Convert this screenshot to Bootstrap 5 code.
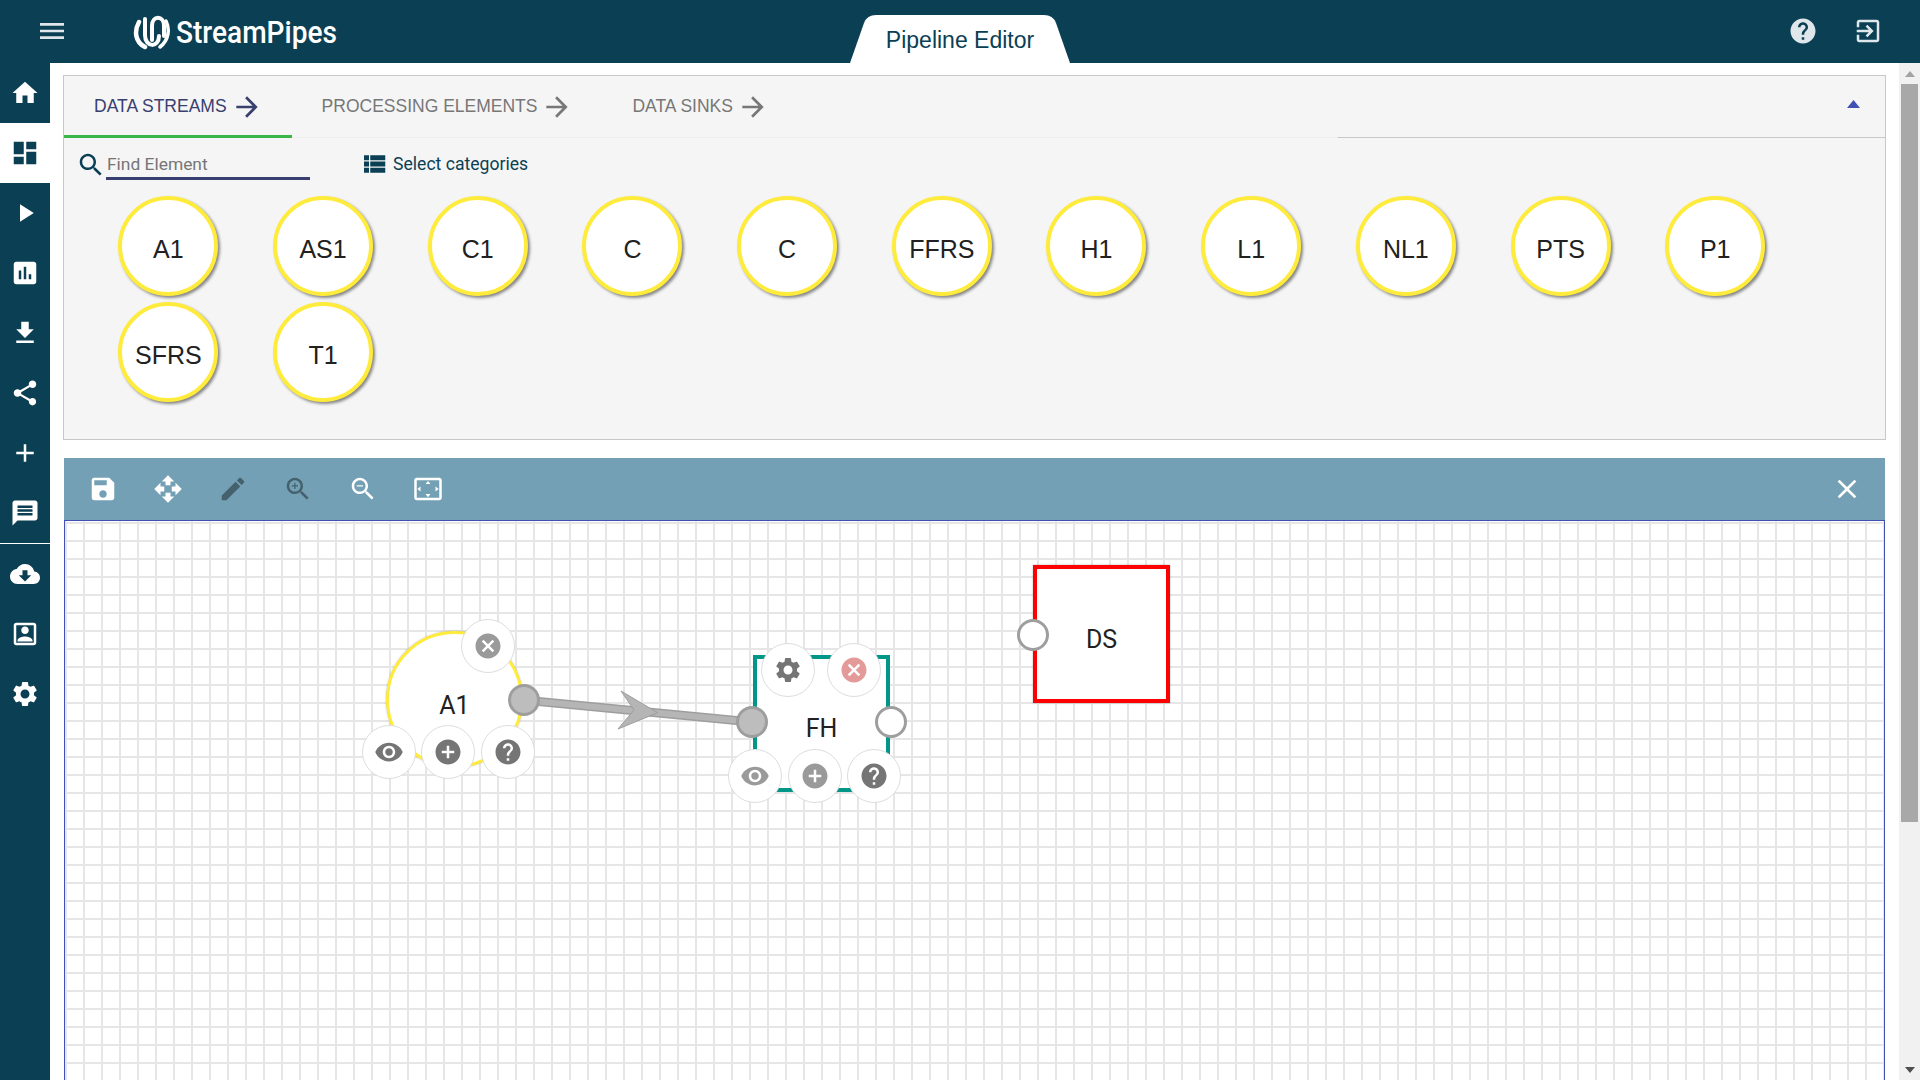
<!DOCTYPE html>
<html lang="en">
<head>
  <meta charset="UTF-8" />
  <meta name="viewport" content="width=device-width, initial-scale=1" />
  <title>StreamPipes - Pipeline Editor</title>
  <link href="https://cdn.jsdelivr.net/npm/bootstrap@5.3.0/dist/css/bootstrap.min.css" rel="stylesheet" />
  <style>
    html, body { height: 100%; }
    body { font-family: Roboto, "Liberation Sans", sans-serif; overflow: hidden; background: #fff; color: #212121; }
    .ico { width: 30px; height: 30px; fill: currentColor; flex: none; display: block; }

    .sp-top { height: 63px; background: #0b3f54; flex: none; }
    .sp-top-side { flex: 1 1 0; min-width: 0; }
    .sp-burger { width: 50px; margin: -2px 0 0 27px; padding: 0; border: 0; background: none; color: #dfe7ea; display: flex; justify-content: center; }
    .sp-burger .ico { width: 32px; height: 32px; }
    .sp-logo { margin-left: 56px; color: #fff; }
    .sp-logo svg { width: 38px; height: 38px; display: block; margin-top: -1px; }
    .sp-logo-text { font: 500 31px/1 Roboto, sans-serif; margin: 2px 0 0 5px; transform: scaleX(.905); transform-origin: left center; white-space: nowrap; }
    .sp-tab { width: 220px; height: 48px; margin-top: 15px; background: #fff; color: #0b3f54; font: 23px "Liberation Sans", sans-serif; text-align: center; line-height: 50px;
      clip-path: path('M0 48 L14 8 Q17 0 26 0 L194 0 Q203 0 206 8 L220 48 Z'); }
    .sp-top-btn { color: #dfe7ea; margin-top: -2px; }
    .sp-top-btn + .sp-top-btn { margin-left: 35px; margin-right: 37px; }

    .sp-side { width: 50px; flex: none; background: #0b3f54; padding: 0; }
    .sp-side-item { height: 60px; padding: 0; color: #fff; display: flex; align-items: center; justify-content: center; }
    .sp-side-item.is-on { background: #fff; color: #0b3f54; }
    .sp-side-sep { height: 1px; background: #fff; }

    .sp-main { padding: 12px 13px 0; min-width: 0; }
    .sp-panel { height: 365px; background: #f5f5f5; border: 1px solid #c8c8c8; flex: none; }

    .sp-tabs { height: 62px; }
    .sp-tabs-group { width: 1274px; border-bottom: 1px solid #ededed; }
    .sp-tab-link { padding: 2px 29px 0 30px; gap: 4px; color: #777; font: 17.5px "Liberation Sans", sans-serif; white-space: nowrap; border-bottom: 3px solid transparent; height: 62px; margin-bottom: -1px; }
    .sp-tab-link .ico { width: 32px; height: 32px; }
    .sp-tab-link:hover { color: #777; }
    .sp-tab-link.is-on { color: #39406f; border-bottom-color: #39b54a; }
    .sp-tabs-rest { border-bottom: 1px solid #c8c8c8; padding-right: 25px; color: #3f51b5; }
    .sp-tabs-rest svg { width: 13px; height: 8px; fill: currentColor; margin-bottom: 5px; }

    .sp-find { padding: 8px 0 16px 12px; height: 58px; color: #0b3f54; }
    .sp-find > .ico { margin-top: 3px; }
    .sp-find-input.form-control { width: 204px; height: 34px; padding: 4px 0 0 1px; background: transparent; border: 0; border-bottom: 3px solid #39406f; border-radius: 0; font-size: 17.4px; box-shadow: none; }
    .sp-find-input::placeholder { color: #757575; opacity: 1; }
    .sp-cats { margin: 2px 0 0 49px; gap: 4px; font-size: 17.6px; }

    .sp-palette { display: grid; grid-template-columns: repeat(11, 154.7px); grid-auto-rows: 106px; padding-left: 27px; }
    .sp-bubble { width: 100px; height: 100px; justify-self: center; border-radius: 50%; background: #fff; border: 4px solid #ffeb3b; box-shadow: 2px 2px 3px rgba(0,0,0,.45); display: flex; align-items: center; justify-content: center; padding-top: 7px; font: 25px "Liberation Sans", sans-serif; color: #212121; }

    .sp-bar { height: 62px; margin: 18px 1px 0; background: #73a0b4; color: #fff; flex: none; padding-left: 24px; padding-right: 22px; gap: 35px; }
    .sp-bar .is-off { color: #45616d; }
    .sp-bar-close.ico { width: 32px; height: 32px; }

    .sp-canvas { position: relative; margin: 0 1px; overflow: hidden; background-color: #fff; border: 1px solid #3f51b5; border-bottom: 0;
      background-image: linear-gradient(#e6e6e6 2px, transparent 2px), linear-gradient(90deg, #e6e6e6 2px, transparent 2px);
      background-size: 18px 18px; background-position: 0 1px; }
    .sp-node { position: absolute; width: 137px; height: 137px; background: #fff; display: flex; align-items: center; justify-content: center; font-size: 25px; }
    .sp-node-stream { left: 321px; top: 110px; border: 3px solid #ffeb3b; border-radius: 50%; padding-top: 13px; box-shadow: 0 0 2px rgba(0,0,0,.3); }
    .sp-node-proc { left: 688px; top: 134px; border: 4px solid #009688; padding-top: 11px; }
    .sp-node-sink { left: 968px; top: 44px; height: 138px; border: 4px solid #f00; padding-top: 11px; box-shadow: 0 0 2px rgba(0,0,0,.3); }
    .sp-wire { position: absolute; left: 0; top: 0; width: 1000px; height: 400px; }
    .sp-port { position: absolute; width: 32px; height: 32px; margin: -16px 0 0 -16px; border-radius: 50%; background: #fff; border: 3px solid #9e9e9e; }
    .sp-port.is-full { background: #bdbdbd; }
    .sp-act { position: absolute; width: 54px; height: 54px; margin: -27px 0 0 -27px; border-radius: 50%; background: #fff; border: 1px solid #ddd; color: #757575; display: flex; align-items: center; justify-content: center; }
    .sp-act.is-dim { color: #9a9a9a; }
    .sp-act.is-red { color: #e59a9a; }

    .p1 { left: 459px; top: 179px; } .p2 { left: 687px; top: 201px; } .p3 { left: 826px; top: 201px; } .p4 { left: 968px; top: 114px; }
    .b1 { left: 423px; top: 125px; } .b2 { left: 324px; top: 231px; } .b3 { left: 383px; top: 231px; } .b4 { left: 443px; top: 231px; }
    .b5 { left: 723px; top: 149px; } .b6 { left: 789px; top: 149px; } .b7 { left: 690px; top: 255px; } .b8 { left: 750px; top: 255px; } .b9 { left: 809px; top: 255px; }

    .sp-scroll { width: 21px; flex: none; background: #f1f1f1; padding: 0 2px; }
    .sp-scroll-up, .sp-scroll-down { height: 21px; color: #a3a3a3; }
    .sp-scroll-down { color: #505050; margin-top: auto; }
    .sp-scroll svg { width: 10px; height: 6px; fill: currentColor; }
    .sp-scroll-thumb { height: 738px; background: #a8a8a8; }
  </style>
</head>
<body class="d-flex flex-column">
  <svg class="d-none">
    <symbol id="i-menu" viewBox="0 0 24 24"><path d="M3 18h18v-2H3v2zm0-5h18v-2H3v2zm0-7v2h18V6H3z"/></symbol>
    <symbol id="i-home" viewBox="0 0 24 24"><path d="M10 20v-6h4v6h5v-8h3L12 3 2 12h3v8z"/></symbol>
    <symbol id="i-dash" viewBox="0 0 24 24"><path d="M3 13h8V3H3v10zm0 8h8v-6H3v6zm10 0h8V11h-8v10zm0-18v6h8V3h-8z"/></symbol>
    <symbol id="i-play" viewBox="0 0 24 24"><path d="M8 5v14l11-7z"/></symbol>
    <symbol id="i-chart" viewBox="0 0 24 24"><path d="M19 3H5c-1.1 0-2 .9-2 2v14c0 1.1.9 2 2 2h14c1.1 0 2-.9 2-2V5c0-1.1-.9-2-2-2zM9 17H7v-7h2v7zm4 0h-2V7h2v10zm4 0h-2v-4h2v4z"/></symbol>
    <symbol id="i-down" viewBox="0 0 24 24"><path d="M19 9h-4V3H9v6H5l7 7 7-7zM5 18v2h14v-2H5z"/></symbol>
    <symbol id="i-share" viewBox="0 0 24 24"><path d="M18 16.08c-.76 0-1.44.3-1.96.77L8.91 12.7c.05-.23.09-.46.09-.7s-.04-.47-.09-.7l7.05-4.11c.54.5 1.25.81 2.04.81 1.66 0 3-1.34 3-3s-1.34-3-3-3-3 1.34-3 3c0 .24.04.47.09.7L8.04 9.81C7.5 9.31 6.79 9 6 9c-1.66 0-3 1.34-3 3s1.34 3 3 3c.79 0 1.5-.31 2.04-.81l7.12 4.16c-.05.21-.08.43-.08.65 0 1.61 1.31 2.92 2.92 2.92 1.61 0 2.92-1.31 2.92-2.92s-1.31-2.92-2.92-2.92z"/></symbol>
    <symbol id="i-add" viewBox="0 0 24 24"><path d="M19 13h-6v6h-2v-6H5v-2h6V5h2v6h6v2z"/></symbol>
    <symbol id="i-msg" viewBox="0 0 24 24"><path d="M20 2H4c-1.1 0-1.99.9-1.99 2L2 22l4-4h14c1.1 0 2-.9 2-2V4c0-1.1-.9-2-2-2zm-2 12H6v-2h12v2zm0-3H6V9h12v2zm0-3H6V6h12v2z"/></symbol>
    <symbol id="i-cloud" viewBox="0 0 24 24"><path d="M19.35 10.04C18.67 6.59 15.64 4 12 4 9.11 4 6.6 5.64 5.35 8.04 2.34 8.36 0 10.91 0 14c0 3.31 2.69 6 6 6h13c2.76 0 5-2.24 5-5 0-2.64-2.05-4.78-4.65-4.96zM17 13l-5 5-5-5h3V9h4v4h3z"/></symbol>
    <symbol id="i-user" viewBox="0 0 24 24"><path d="M19 5v14H5V5h14m0-2H5c-1.11 0-2 .9-2 2v14c0 1.1.89 2 2 2h14c1.1 0 2-.9 2-2V5c0-1.1-.9-2-2-2zm-7 9c1.66 0 3-1.34 3-3s-1.34-3-3-3-3 1.34-3 3 1.34 3 3 3zm-6 6h12v-1c0-2-4-3.1-6-3.1s-6 1.1-6 3.1v1z"/></symbol>
    <symbol id="i-gear" viewBox="0 0 24 24"><path d="M19.14 12.94c.04-.3.06-.61.06-.94 0-.32-.02-.64-.07-.94l2.03-1.58c.18-.14.23-.41.12-.61l-1.92-3.32c-.12-.22-.37-.29-.59-.22l-2.39.96c-.5-.38-1.03-.7-1.62-.94l-.36-2.54c-.04-.24-.24-.41-.48-.41h-3.84c-.24 0-.43.17-.47.41l-.36 2.54c-.59.24-1.13.57-1.62.94l-2.39-.96c-.22-.08-.47 0-.59.22L2.74 8.87c-.12.21-.08.47.12.61l2.03 1.58c-.05.3-.09.63-.09.94s.02.64.07.94l-2.03 1.58c-.18.14-.23.41-.12.61l1.92 3.32c.12.22.37.29.59.22l2.39-.96c.5.38 1.03.7 1.62.94l.36 2.54c.05.24.24.41.48.41h3.84c.24 0 .44-.17.47-.41l.36-2.54c.59-.24 1.13-.56 1.62-.94l2.39.96c.22.08.47 0 .59-.22l1.92-3.32c.12-.22.07-.47-.12-.61l-2.01-1.58zM12 15.6c-1.98 0-3.6-1.62-3.6-3.6s1.62-3.6 3.6-3.6 3.6 1.62 3.6 3.6-1.62 3.6-3.6 3.6z"/></symbol>
    <symbol id="i-search" viewBox="0 0 24 24"><path d="M15.5 14h-.79l-.28-.27C15.41 12.59 16 11.11 16 9.5 16 5.91 13.09 3 9.5 3S3 5.91 3 9.5 5.91 16 9.5 16c1.61 0 3.09-.59 4.23-1.57l.27.28v.79l5 4.99L20.49 19l-4.99-5zm-6 0C7.01 14 5 11.99 5 9.5S7.01 5 9.5 5 14 7.01 14 9.5 11.99 14 9.5 14z"/></symbol>
    <symbol id="i-list" viewBox="0 0 24 24"><path d="M4 14h4v-4H4v4zm0 5h4v-4H4v4zM4 9h4V5H4v4zm5 5h12v-4H9v4zm0 5h12v-4H9v4zM9 5v4h12V5H9z"/></symbol>
    <symbol id="i-arrow" viewBox="0 0 24 24"><path d="M12 4l-1.41 1.41L16.17 11H4v2h12.17l-5.58 5.59L12 20l8-8z"/></symbol>
    <symbol id="i-help" viewBox="0 0 24 24"><path d="M12 2C6.48 2 2 6.48 2 12s4.48 10 10 10 10-4.48 10-10S17.52 2 12 2zm1 17h-2v-2h2v2zm2.07-7.75l-.9.92C13.45 12.9 13 13.5 13 15h-2v-.5c0-1.1.45-2.1 1.17-2.83l1.24-1.26c.37-.36.59-.86.59-1.41 0-1.1-.9-2-2-2s-2 .9-2 2H8c0-2.21 1.79-4 4-4s4 1.79 4 4c0 .88-.36 1.68-.93 2.25z"/></symbol>
    <symbol id="i-exit" viewBox="0 0 24 24"><path d="M10.09 15.59L11.5 17l5-5-5-5-1.41 1.41L12.67 11H3v2h9.67l-2.58 2.59zM19 3H5c-1.11 0-2 .9-2 2v4h2V5h14v14H5v-4H3v4c0 1.1.89 2 2 2h14c1.1 0 2-.9 2-2V5c0-1.1-.9-2-2-2z"/></symbol>
    <symbol id="i-save" viewBox="0 0 24 24"><path d="M17 3H5c-1.11 0-2 .9-2 2v14c0 1.1.89 2 2 2h14c1.1 0 2-.9 2-2V7l-4-4zm-5 16c-1.66 0-3-1.34-3-3s1.34-3 3-3 3 1.34 3 3-1.34 3-3 3zm3-10H5V5h10v4z"/></symbol>
    <symbol id="i-move" viewBox="0 0 24 24"><path d="M10 9h4V6h3l-5-5-5 5h3v3zm-1 1H6V7l-5 5 5 5v-3h3v-4zm14 2l-5-5v3h-3v4h3v3l5-5zm-9 3h-4v3H7l5 5 5-5h-3v-3z"/></symbol>
    <symbol id="i-edit" viewBox="0 0 24 24"><path d="M3 17.25V21h3.75L17.81 9.94l-3.75-3.75L3 17.25zM20.71 7.04c.39-.39.39-1.02 0-1.41l-2.34-2.34c-.39-.39-1.02-.39-1.41 0l-1.83 1.83 3.75 3.75 1.83-1.83z"/></symbol>
    <symbol id="i-zin" viewBox="0 0 24 24"><path d="M15.5 14h-.79l-.28-.27C15.41 12.59 16 11.11 16 9.5 16 5.91 13.09 3 9.5 3S3 5.91 3 9.5 5.91 16 9.5 16c1.61 0 3.09-.59 4.23-1.57l.27.28v.79l5 4.99L20.49 19l-4.99-5zm-6 0C7.01 14 5 11.99 5 9.5S7.01 5 9.5 5 14 7.01 14 9.5 11.99 14 9.5 14z"/><path d="M12 10h-2v2H9v-2H7V9h2V7h1v2h2v1z"/></symbol>
    <symbol id="i-zout" viewBox="0 0 24 24"><path d="M15.5 14h-.79l-.28-.27C15.41 12.59 16 11.11 16 9.5 16 5.91 13.09 3 9.5 3S3 5.91 3 9.5 5.91 16 9.5 16c1.61 0 3.09-.59 4.23-1.57l.27.28v.79l5 4.99L20.49 19l-4.99-5zm-6 0C7.01 14 5 11.99 5 9.5S7.01 5 9.5 5 14 7.01 14 9.5 11.99 14 9.5 14z"/><path d="M7 9h5v1H7z"/></symbol>
    <symbol id="i-fit" viewBox="0 0 24 24"><path d="M12.01 5.5L10 8h4l-1.99-2.5zM18 10v4l2.5-1.99L18 10zM6 10l-2.5 2.01L6 14v-4zm8 6h-4l2.01 2.5L14 16zm7-13H3c-1.1 0-2 .9-2 2v14c0 1.1.9 2 2 2h18c1.1 0 2-.9 2-2V5c0-1.1-.9-2-2-2zm0 16.01H3V4.99h18v14.02z"/></symbol>
    <symbol id="i-close" viewBox="0 0 24 24"><path d="M19 6.41L17.59 5 12 10.59 6.41 5 5 6.41 10.59 12 5 17.59 6.41 19 12 13.41 17.59 19 19 17.59 13.41 12z"/></symbol>
    <symbol id="i-cancel" viewBox="0 0 24 24"><path d="M12 2C6.47 2 2 6.47 2 12s4.47 10 10 10 10-4.47 10-10S17.53 2 12 2zm5 13.59L15.59 17 12 13.41 8.41 17 7 15.59 10.59 12 7 8.41 8.41 7 12 10.59 15.59 7 17 8.41 13.41 12 17 15.59z"/></symbol>
    <symbol id="i-eye" viewBox="0 0 24 24"><path d="M12 4.5C7 4.5 2.73 7.61 1 12c1.73 4.39 6 7.5 11 7.5s9.27-3.11 11-7.5c-1.73-4.39-6-7.5-11-7.5zM12 17c-2.76 0-5-2.24-5-5s2.24-5 5-5 5 2.24 5 5-2.24 5-5 5zm0-8c-1.66 0-3 1.34-3 3s1.34 3 3 3 3-1.34 3-3-1.34-3-3-3z"/></symbol>
    <symbol id="i-plus" viewBox="0 0 24 24"><path d="M12 2C6.48 2 2 6.48 2 12s4.48 10 10 10 10-4.48 10-10S17.52 2 12 2zm5 11h-4v4h-2v-4H7v-2h4V7h2v4h4v2z"/></symbol>
  </svg>

  <!-- top bar -->
  <header class="sp-top d-flex">
    <div class="sp-top-side d-flex align-items-center">
      <button class="sp-burger" type="button"><svg class="ico"><use href="#i-menu"/></svg></button>
      <div class="sp-logo d-flex align-items-center">
        <svg viewBox="0 0 38 38" fill="none" stroke="#fff" stroke-linecap="round">
          <path d="M6 10 C1 19 2 30 12 35" stroke-width="4.5"/>
          <path d="M12 7 V23 C12 36 26 36 26 24" stroke-width="4"/>
          <path d="M19 28 V14 C19 3 31 3 31 14 V24" stroke-width="4"/>
          <path d="M33 9 C37 17 36 28 27 35" stroke-width="3.5"/>
        </svg>
        <span class="sp-logo-text">StreamPipes</span>
      </div>
    </div>
    <div class="sp-tab">Pipeline Editor</div>
    <div class="sp-top-side d-flex align-items-center justify-content-end">
      <span class="sp-top-btn"><svg class="ico"><use href="#i-help"/></svg></span>
      <span class="sp-top-btn"><svg class="ico"><use href="#i-exit"/></svg></span>
    </div>
  </header>

  <div class="d-flex flex-grow-1" style="min-height:0">
    <!-- left menu -->
    <nav class="sp-side nav flex-column flex-nowrap">
      <a class="sp-side-item" href="#"><svg class="ico"><use href="#i-home"/></svg></a>
      <a class="sp-side-item is-on" href="#"><svg class="ico"><use href="#i-dash"/></svg></a>
      <a class="sp-side-item" href="#"><svg class="ico"><use href="#i-play"/></svg></a>
      <a class="sp-side-item" href="#"><svg class="ico"><use href="#i-chart"/></svg></a>
      <a class="sp-side-item" href="#"><svg class="ico"><use href="#i-down"/></svg></a>
      <a class="sp-side-item" href="#"><svg class="ico"><use href="#i-share"/></svg></a>
      <a class="sp-side-item" href="#"><svg class="ico"><use href="#i-add"/></svg></a>
      <a class="sp-side-item" href="#"><svg class="ico"><use href="#i-msg"/></svg></a>
      <div class="sp-side-sep"></div>
      <a class="sp-side-item" href="#"><svg class="ico"><use href="#i-cloud"/></svg></a>
      <a class="sp-side-item" href="#"><svg class="ico"><use href="#i-user"/></svg></a>
      <a class="sp-side-item" href="#"><svg class="ico"><use href="#i-gear"/></svg></a>
    </nav>

    <main class="sp-main flex-grow-1 d-flex flex-column">
      <section class="sp-panel">
        <div class="sp-tabs d-flex">
          <div class="sp-tabs-group d-flex">
            <a class="sp-tab-link is-on d-flex align-items-center text-decoration-none" href="#">DATA STREAMS<svg class="ico"><use href="#i-arrow"/></svg></a>
            <a class="sp-tab-link d-flex align-items-center text-decoration-none" href="#">PROCESSING ELEMENTS<svg class="ico"><use href="#i-arrow"/></svg></a>
            <a class="sp-tab-link d-flex align-items-center text-decoration-none" href="#">DATA SINKS<svg class="ico"><use href="#i-arrow"/></svg></a>
          </div>
          <div class="sp-tabs-rest flex-grow-1 d-flex align-items-center justify-content-end">
            <svg viewBox="0 0 13 8"><path d="M6.5 0L13 8H0z"/></svg>
          </div>
        </div>

        <div class="sp-find d-flex align-items-center">
          <svg class="ico"><use href="#i-search"/></svg>
          <input class="sp-find-input form-control" type="text" placeholder="Find Element" />
          <div class="sp-cats d-flex align-items-center">
            <svg class="ico"><use href="#i-list"/></svg>
            <span>Select categories</span>
          </div>
        </div>

        <div class="sp-palette">
          <div class="sp-bubble">A1</div>
          <div class="sp-bubble">AS1</div>
          <div class="sp-bubble">C1</div>
          <div class="sp-bubble">C</div>
          <div class="sp-bubble">C</div>
          <div class="sp-bubble">FFRS</div>
          <div class="sp-bubble">H1</div>
          <div class="sp-bubble">L1</div>
          <div class="sp-bubble">NL1</div>
          <div class="sp-bubble">PTS</div>
          <div class="sp-bubble">P1</div>
          <div class="sp-bubble">SFRS</div>
          <div class="sp-bubble">T1</div>
        </div>
      </section>

      <div class="sp-bar d-flex align-items-center">
        <svg class="ico"><use href="#i-save"/></svg>
        <svg class="ico"><use href="#i-move"/></svg>
        <svg class="ico is-off"><use href="#i-edit"/></svg>
        <svg class="ico is-off"><use href="#i-zin"/></svg>
        <svg class="ico"><use href="#i-zout"/></svg>
        <svg class="ico"><use href="#i-fit"/></svg>
        <svg class="ico sp-bar-close ms-auto"><use href="#i-close"/></svg>
      </div>

      <div class="sp-canvas flex-grow-1">
        <div class="sp-node sp-node-stream">A1</div>
        <div class="sp-node sp-node-proc">FH</div>
        <div class="sp-node sp-node-sink">DS</div>

        <svg class="sp-wire" viewBox="0 0 1000 400">
          <line x1="458" y1="179" x2="687" y2="201" stroke="#9e9e9e" stroke-width="9"/>
          <line x1="458" y1="179" x2="687" y2="201" stroke="#b5b5b5" stroke-width="6"/>
          <path d="M592.6 191.7L556 170 569 189 553 208z" fill="#b5b5b5" stroke="#9e9e9e" stroke-width="1"/>
        </svg>

        <span class="sp-port is-full p1"></span>
        <span class="sp-port is-full p2"></span>
        <span class="sp-port p3"></span>
        <span class="sp-port p4"></span>

        <span class="sp-act is-dim b1"><svg class="ico"><use href="#i-cancel"/></svg></span>
        <span class="sp-act b2"><svg class="ico"><use href="#i-eye"/></svg></span>
        <span class="sp-act b3"><svg class="ico"><use href="#i-plus"/></svg></span>
        <span class="sp-act b4"><svg class="ico"><use href="#i-help"/></svg></span>

        <span class="sp-act b5"><svg class="ico"><use href="#i-gear"/></svg></span>
        <span class="sp-act is-red b6"><svg class="ico"><use href="#i-cancel"/></svg></span>
        <span class="sp-act is-dim b7"><svg class="ico"><use href="#i-eye"/></svg></span>
        <span class="sp-act is-dim b8"><svg class="ico"><use href="#i-plus"/></svg></span>
        <span class="sp-act b9"><svg class="ico"><use href="#i-help"/></svg></span>
      </div>
    </main>

    <!-- page scrollbar -->
    <div class="sp-scroll d-flex flex-column">
      <div class="sp-scroll-up d-flex align-items-center justify-content-center"><svg viewBox="0 0 10 6"><path d="M5 0l5 6H0z"/></svg></div>
      <div class="sp-scroll-thumb"></div>
      <div class="sp-scroll-down d-flex align-items-center justify-content-center"><svg viewBox="0 0 10 6"><path d="M0 0h10L5 6z"/></svg></div>
    </div>
  </div>

  <script src="https://cdn.jsdelivr.net/npm/bootstrap@5.3.0/dist/js/bootstrap.bundle.min.js"></script>
</body>
</html>
